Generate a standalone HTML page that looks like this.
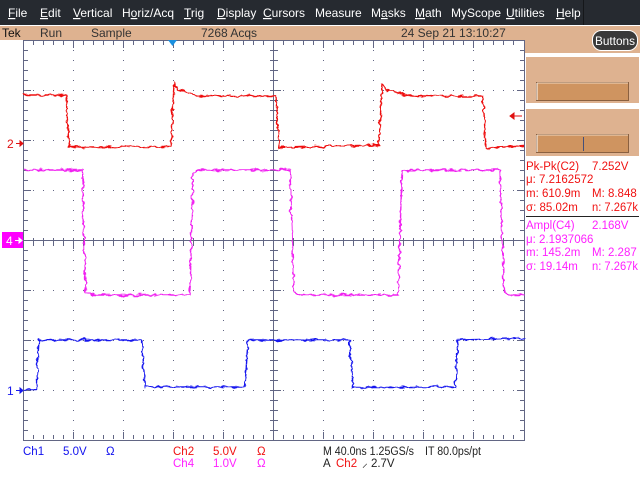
<!DOCTYPE html>
<html><head><meta charset="utf-8"><style>
html,body{margin:0;padding:0;background:#fff;width:640px;height:480px;overflow:hidden}
svg{display:block;font-family:"Liberation Sans",sans-serif}
</style></head><body>
<svg width="640" height="480" viewBox="0 0 640 480" xmlns="http://www.w3.org/2000/svg">
<defs>
<filter id="nz" x="-5%" y="-20%" width="110%" height="140%">
<feTurbulence type="fractalNoise" baseFrequency="0.15 0.2" numOctaves="2" seed="5"/>
<feDisplacementMap in="SourceGraphic" scale="5" xChannelSelector="G" yChannelSelector="R"/>
</filter>
</defs>
<rect width="640" height="480" fill="#fff"/>
<rect x="0" y="0" width="640" height="25" fill="#262a30"/>
<line x1="583.5" y1="0" x2="583.5" y2="25" stroke="#15171a"/>
<g fill="#fff" font-size="12">
<text x="8" y="17"><tspan text-decoration="underline">F</tspan>ile</text>
<text x="40" y="17"><tspan text-decoration="underline">E</tspan>dit</text>
<text x="73" y="17"><tspan text-decoration="underline">V</tspan>ertical</text>
<text x="122" y="17">H<tspan text-decoration="underline">o</tspan>riz/Acq</text>
<text x="184" y="17"><tspan text-decoration="underline">T</tspan>rig</text>
<text x="217" y="17"><tspan text-decoration="underline">D</tspan>isplay</text>
<text x="263" y="17"><tspan text-decoration="underline">C</tspan>ursors</text>
<text x="315" y="17">Measure</text>
<text x="371" y="17">M<tspan text-decoration="underline">a</tspan>sks</text>
<text x="415" y="17"><tspan text-decoration="underline">M</tspan>ath</text>
<text x="451" y="17">MyScope</text>
<text x="506" y="17"><tspan text-decoration="underline">U</tspan>tilities</text>
<text x="556" y="17"><tspan text-decoration="underline">H</tspan>elp</text>
</g>
<rect x="0" y="26" width="640" height="14" fill="#deb290"/>
<rect x="525" y="26" width="115" height="27" fill="#deb290"/>
<g font-size="12" fill="#333">
<text x="2" y="37" fill="#111">Tek</text>
<text x="40" y="37">Run</text>
<text x="91" y="37">Sample</text>
<text x="201" y="37">7268 Acqs</text>
<text x="401" y="37">24 Sep 21 13:10:27</text>
</g>
<rect x="592.5" y="30.5" width="45" height="20" rx="9" fill="#3a3a3a" stroke="#fff"/>
<text x="595" y="45" font-size="12" fill="#fff" textLength="40" lengthAdjust="spacingAndGlyphs">Buttons</text>
<rect x="526" y="57" width="113" height="46" fill="#deb290"/>
<rect x="536.5" y="82.5" width="92" height="18" fill="#cf9460" stroke="#8a6040"/>
<line x1="537" y1="83" x2="537" y2="100" stroke="#fff"/><line x1="537" y1="83" x2="628" y2="83" stroke="#f0d8c0"/>
<rect x="526" y="109" width="113" height="47" fill="#deb290"/>
<rect x="536.5" y="134.5" width="92" height="18" fill="#cf9460" stroke="#8a6040"/>
<line x1="537" y1="135" x2="537" y2="152" stroke="#fff"/><line x1="537" y1="135" x2="628" y2="135" stroke="#f0d8c0"/>
<line x1="583.5" y1="137" x2="583.5" y2="151" stroke="#44507a"/>
<g font-size="11.5" fill="#f01010">
<text x="526" y="170">Pk-Pk(C2)</text><text x="592" y="170">7.252V</text>
<text x="526" y="183">μ:  7.2162572</text>
<text x="526" y="197">m: 610.9m</text><text x="592" y="197">M: 8.848</text>
<text x="526" y="211">σ:  85.02m</text><text x="592" y="211" textLength="46" lengthAdjust="spacingAndGlyphs">n:  7.267k</text>
</g>
<line x1="526" y1="216.5" x2="639" y2="216.5" stroke="#222"/>
<g font-size="11.5" fill="#ff20ff">
<text x="526" y="229">Ampl(C4)</text><text x="592" y="229">2.168V</text>
<text x="526" y="243">μ:  2.1937066</text>
<text x="526" y="256">m: 145.2m</text><text x="592" y="256">M: 2.287</text>
<text x="526" y="270">σ:  19.14m</text><text x="592" y="270" textLength="46" lengthAdjust="spacingAndGlyphs">n:  7.267k</text>
</g>
<g stroke="#626684" fill="none">
<g stroke-dasharray="1 9">
<path d="M73.5 50V440M123.5 50V440M173.5 50V440M223.5 50V440M323.5 50V440M373.5 50V440M423.5 50V440M473.5 50V440"/>
<path d="M33 90.5H525M33 140.5H525M33 190.5H525M33 290.5H525M33 340.5H525M33 390.5H525"/>
</g>
<rect x="23.5" y="40.5" width="501" height="400"/>
<path d="M273.5 40V440M23 240.5H525"/>
<path id="tx" d="M33.5 41v4M43.5 41v4M53.5 41v4M63.5 41v4M73.5 41v7M83.5 41v4M93.5 41v4M103.5 41v4M113.5 41v4M123.5 41v7M133.5 41v4M143.5 41v4M153.5 41v4M163.5 41v4M173.5 41v7M183.5 41v4M193.5 41v4M203.5 41v4M213.5 41v4M223.5 41v7M233.5 41v4M243.5 41v4M253.5 41v4M263.5 41v4M283.5 41v4M293.5 41v4M303.5 41v4M313.5 41v4M323.5 41v7M333.5 41v4M343.5 41v4M353.5 41v4M363.5 41v4M373.5 41v7M383.5 41v4M393.5 41v4M403.5 41v4M413.5 41v4M423.5 41v7M433.5 41v4M443.5 41v4M453.5 41v4M463.5 41v4M473.5 41v7M483.5 41v4M493.5 41v4M503.5 41v4M513.5 41v4"/>
<use href="#tx" transform="translate(0,197)"/>
<use href="#tx" transform="translate(0,201)"/>
<use href="#tx" transform="matrix(1,0,0,-1,0,480)"/>
<path id="ty" d="M24 50.5h4M24 60.5h4M24 70.5h4M24 80.5h4M24 90.5h7M24 100.5h4M24 110.5h4M24 120.5h4M24 130.5h4M24 140.5h7M24 150.5h4M24 160.5h4M24 170.5h4M24 180.5h4M24 190.5h7M24 200.5h4M24 210.5h4M24 220.5h4M24 230.5h4M24 250.5h4M24 260.5h4M24 270.5h4M24 280.5h4M24 290.5h7M24 300.5h4M24 310.5h4M24 320.5h4M24 330.5h4M24 340.5h7M24 350.5h4M24 360.5h4M24 370.5h4M24 380.5h4M24 390.5h7M24 400.5h4M24 410.5h4M24 420.5h4M24 430.5h4"/>
<use href="#ty" transform="translate(246,0)"/>
<use href="#ty" transform="translate(250,0)"/>
<use href="#ty" transform="matrix(-1,0,0,1,548,0)"/>
</g>
<path d="M168 40h9l-4.5 6z" fill="#1a90e0"/>
<path d="M510 116h12M510 116l4-3v6z" stroke="#e01010" fill="#e01010"/>
<g fill="none" stroke-width="1.4" filter="url(#nz)">
<path stroke="#ee1010" d="M24 95L66 95L69 147L171 147L174 83L178 90L200 96L276 96L279 148L300 147L379 145L382 84L386 90L410 96L483 96L486 148L525 146"/>
<path stroke="#f020f0" d="M24 170L82 170L86 292L92 295L190 295L193 172L200 170L290 170L294 292L300 295L398 295L402 172L410 170L500 170L504 292L510 295L525 295"/>
<path stroke="#1818ee" d="M24 390L36 390L39 340L142 340L145 387L245 387L248 340L350 340L353 387L455 387L458 340L525 338"/>
</g>
<text x="7" y="148" font-size="12" fill="#e01010">2</text>
<path d="M16 143.5h7M23 143.5l-3-2.5v5z" stroke="#e01010" fill="#e01010"/>
<rect x="2" y="232" width="21" height="16" fill="#ff00ff"/>
<text x="6" y="245" font-size="12" fill="#fff">4</text>
<path d="M15 240.5h7M22 240.5l-3-2.5v5z" stroke="#fff" fill="#fff"/>
<text x="7" y="395" font-size="12" fill="#1818ee">1</text>
<path d="M16 390.5h7M23 390.5l-3-2.5v5z" stroke="#1818ee" fill="#1818ee"/>
<g font-size="11.5">
<text x="23" y="455" fill="#1010ee">Ch1</text><text x="63" y="455" fill="#1010ee">5.0V</text><text x="106" y="455" fill="#1010ee">Ω</text>
<text x="173" y="455" fill="#f01010">Ch2</text><text x="213" y="455" fill="#f01010">5.0V</text><text x="257" y="455" fill="#f01010">Ω</text>
<text x="173" y="467" fill="#ff20ff">Ch4</text><text x="213" y="467" fill="#ff20ff">1.0V</text><text x="257" y="467" fill="#ff20ff">Ω</text>
<text x="323" y="455" fill="#222" textLength="91" lengthAdjust="spacingAndGlyphs">M 40.0ns 1.25GS/s</text><text x="425" y="455" fill="#222" textLength="56" lengthAdjust="spacingAndGlyphs">IT 80.0ps/pt</text>
<text x="323" y="467" fill="#222">A</text><text x="336" y="467" fill="#f01010">Ch2</text><text x="362" y="467" fill="#222">⸝  2.7V</text>
</g>
</svg>
</body></html>
